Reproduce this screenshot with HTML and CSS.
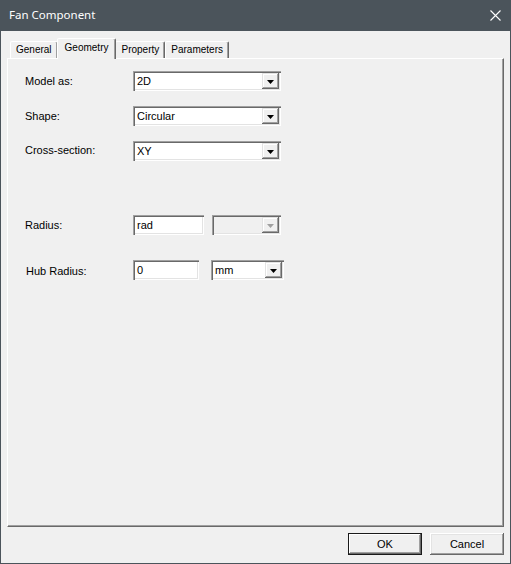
FILE: index.html
```html
<!DOCTYPE html>
<html>
<head>
<meta charset="utf-8">
<link rel="stylesheet" href="styles.css">
</head>
<body>
<div class="window">
  <div class="titlebar">
    <span class="title">Fan Component</span>
    <svg class="close" width="11" height="11" viewBox="0 0 11 11"><path d="M0.5 0.5L10.5 10.5M10.5 0.5L0.5 10.5" stroke="#fff" stroke-width="1.1" fill="none"/></svg>
  </div>
  <div class="client">
    <div class="tabs">
      <div class="tab">General</div>
      <div class="tab active">Geometry</div>
      <div class="tab">Property</div>
      <div class="tab">Parameters</div>
    </div>
    <div class="panel">
      <div class="row">
        <span class="label">Model as:</span>
        <div class="field combo w148"><span class="value">2D</span><span class="drop"><svg width="7" height="4" viewBox="0 0 7 4"><path d="M0 0H7L3.5 4Z"/></svg></span></div>
      </div>
      <div class="row gap15">
        <span class="label">Shape:</span>
        <div class="field combo w148"><span class="value">Circular</span><span class="drop"><svg width="7" height="4" viewBox="0 0 7 4"><path d="M0 0H7L3.5 4Z"/></svg></span></div>
      </div>
      <div class="row gap15">
        <span class="label up">Cross-section:</span>
        <div class="field combo w148"><span class="value">XY</span><span class="drop"><svg width="7" height="4" viewBox="0 0 7 4"><path d="M0 0H7L3.5 4Z"/></svg></span></div>
      </div>
      <div class="row gap54">
        <span class="label">Radius:</span>
        <div class="pair p8">
          <div class="field text w71"><span class="value">rad</span></div>
          <div class="field combo disabled w69"><span class="value"></span><span class="drop"><svg width="7" height="4" viewBox="0 0 7 4"><path d="M0 0H7L3.5 4Z"/></svg></span></div>
        </div>
      </div>
      <div class="row gap25">
        <span class="label hub">Hub Radius:</span>
        <div class="pair p12">
          <div class="field text w66"><span class="value">0</span></div>
          <div class="field combo w73"><span class="value">mm</span><span class="drop"><svg width="7" height="4" viewBox="0 0 7 4"><path d="M0 0H7L3.5 4Z"/></svg></span></div>
        </div>
      </div>
    </div>
    <div class="buttons">
      <button class="btn default">OK</button>
      <button class="btn">Cancel</button>
    </div>
  </div>
</div>
</body>
</html>
```

FILE: styles.css
```css
html, body {
  margin: 0;
  padding: 0;
  background: #f0f0f0;
}

.window {
  width: 511px;
  height: 564px;
  box-sizing: border-box;
  border: 1px solid #4b545b;
  border-top: 0;
  background: #f0f0f0;
  display: flex;
  flex-direction: column;
  font-family: "Liberation Sans", Arial, sans-serif;
  font-size: 11px;
  color: #000;
}

.titlebar {
  height: 31px;
  margin: 0 -1px;
  background: #4b545b;
  display: flex;
  align-items: center;
  justify-content: space-between;
  padding: 0 10px 0 9px;
  color: #fff;
}

.title {
  font-family: "Noto Sans", "Open Sans", sans-serif;
  font-size: 11.5px;
  line-height: 16px;
  margin-top: -1px;
}

.close {
  display: block;
  margin-top: -1px;
}

.client {
  flex: 1;
  display: flex;
  flex-direction: column;
  padding: 7px 6px 0 6px;
}

.tabs {
  display: flex;
  align-items: flex-end;
  height: 20px;
  padding-left: 3px;
  position: relative;
  z-index: 1;
}

.tab {
  height: 17px;
  box-sizing: border-box;
  padding: 0 5px;
  font-size: 10px;
  line-height: 16px;
  border-style: solid;
  border-width: 1px 1px 0 1px;
  border-color: #fff #696969 transparent #fff;
  box-shadow: inset -1px 0 #a0a0a0;
  border-radius: 2px 2px 0 0;
  background: #f0f0f0;
  white-space: nowrap;
}

.tab.active {
  height: 21px;
  margin: 0 -1px -1px -1px;
  padding: 0 7px;
  line-height: 17px;
  position: relative;
  z-index: 2;
}

.panel {
  height: 469px;
  box-sizing: border-box;
  border-style: solid;
  border-width: 1px;
  border-color: #fff #696969 #696969 #fff;
  box-shadow: inset -1px -1px #a0a0a0;
  padding: 12px 0 0 17px;
  display: flex;
  flex-direction: column;
}

.row {
  display: flex;
  align-items: center;
  height: 20px;
}

.gap15 { margin-top: 15px; }
.gap54 { margin-top: 54px; }
.gap25 { margin-top: 25px; }

.label {
  width: 108px;
  flex: none;
  line-height: 13px;
  margin-top: 1px;
}

.label.up {
  margin-top: -2px;
}

.label.hub {
  padding-left: 1px;
  width: 107px;
  margin-top: 3px;
}

.pair {
  display: flex;
  align-items: center;
}

.p8 { gap: 8px; }
.p12 { gap: 12px; }

.field {
  height: 20px;
  box-sizing: border-box;
  padding: 2px;
  background: #fff;
  box-shadow: inset 1px 1px #a0a0a0, inset 2px 2px #696969, inset -1px -1px #fff, inset -2px -2px #e3e3e3;
  display: flex;
  align-items: center;
  justify-content: space-between;
}

.value {
  padding-left: 2px;
  line-height: 14px;
  white-space: nowrap;
}

.w148 { width: 148px; }
.w71 { width: 71px; }
.w69 { width: 69px; }
.w66 { width: 66px; }
.w73 { width: 73px; }

.drop {
  width: 17px;
  height: 16px;
  box-sizing: border-box;
  background: #f0f0f0;
  box-shadow: inset -1px -1px #696969, inset 1px 1px #e3e3e3, inset -2px -2px #a0a0a0, inset 2px 2px #fff;
  display: flex;
  align-items: center;
  justify-content: center;
}

.drop svg {
  display: block;
  fill: #000;
  margin: 1px 0 0 -1px;
}

.combo.disabled {
  background: #f0f0f0;
}

.combo.disabled .drop svg {
  fill: #a0a0a0;
}

.buttons {
  display: flex;
  justify-content: flex-end;
  gap: 8px;
  margin-top: 6px;
}

.btn {
  width: 74px;
  height: 22px;
  border: 0;
  padding: 0;
  margin: 0;
  background: #f0f0f0;
  font-family: "Liberation Sans", Arial, sans-serif;
  font-size: 11px;
  color: #000;
  box-shadow: inset -1px -1px #696969, inset 1px 1px #fff, inset -2px -2px #a0a0a0, inset 2px 2px #e3e3e3;
}

.btn.default {
  box-shadow: inset 0 0 0 1px #1a1a1a, inset -2px -2px #696969, inset 2px 2px #fff, inset -3px -3px #a0a0a0;
}
```
